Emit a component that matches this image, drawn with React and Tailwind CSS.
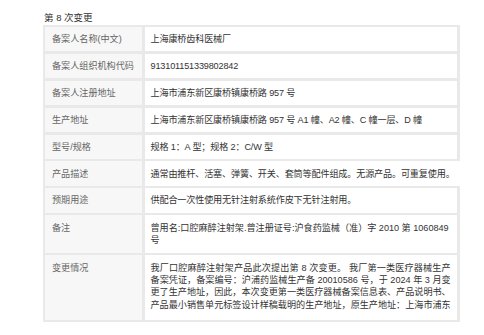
export default function App() {
  const rows = [
    ["备案人名称(中文)", "上海康桥齿科医械厂"],
    ["备案人组织机构代码", "913101151339802842"],
    ["备案人注册地址", "上海市浦东新区康桥镇康桥路 957 号"],
    ["生产地址", "上海市浦东新区康桥镇康桥路 957 号 A1 幢、A2 幢、C 幢一层、D 幢"],
    ["型号/规格", "规格 1：A 型；规格 2：C/W 型"],
    ["产品描述", "通常由推杆、活塞、弹簧、开关、套筒等配件组成。无源产品。可重复使用。"],
    ["预期用途", "供配合一次性使用无针注射系统作皮下无针注射用。"],
  ];
  const font = { fontFamily: '"Liberation Sans", "Noto Sans CJK SC", sans-serif' };
  return (
    <div className="bg-white w-[484px] h-[335px] overflow-hidden pl-[42.5px] pt-[12px]" style={font}>
      <div className="text-[9.5px] leading-[12px] text-[#333] pl-[1.5px] mb-[0.5px]">第 8 次变更</div>
      <div className="w-[417.5px] bg-[#e9e9e9] p-[2.5px] pr-[3.3px] pb-[1.7px] flex flex-col gap-[2.5px] text-[9.1px] leading-[12.3px]">
        {rows.map(([k, v]) => (
          <div key={k} className="grid grid-cols-[97px_1fr] gap-[2.5px] h-[24.4px]">
            <div className="bg-[#f7f7f7] text-[#666] px-[7px] flex items-center whitespace-nowrap">{k}</div>
            <div className="bg-white text-[#333] px-[6px] flex items-center whitespace-nowrap tracking-[-0.15px]">{v}</div>
          </div>
        ))}
        <div className="grid grid-cols-[97px_1fr] gap-[2.5px] h-[37.5px]">
          <div className="bg-[#f7f7f7] text-[#666] px-[7px] pt-[6.4px]">备注</div>
          <div className="bg-white text-[#333] px-[6px] pt-[6.4px]">
            曾用名:口腔麻醉注射架.曾注册证号:沪食药监械（准）字 2010 第 1060849
            <br />号
          </div>
        </div>
        <div className="grid grid-cols-[97px_1fr] gap-[2.5px] h-[65px]">
          <div className="bg-[#f7f7f7] text-[#666] px-[7px] pt-[6.5px]">变更情况</div>
          <div className="bg-white text-[#333] px-[6px] pt-[6.5px]">
            <div className="text-justify [text-align-last:justify]">
              我厂口腔麻醉注射架产品此次提出第 8 次变更。 我厂第一类医疗器械生产备案凭证，备案编号：沪浦药监械生产备 20010586 号，于 2024 年 3 月变更了生产地址，因此，本次变更第一类医疗器械备案信息表、产品说明书、产品最小销售单元标签设计样稿载明的生产地址，原生产地址：上海市浦东
            </div>
          </div>
        </div>
      </div>
    </div>
  );
}
